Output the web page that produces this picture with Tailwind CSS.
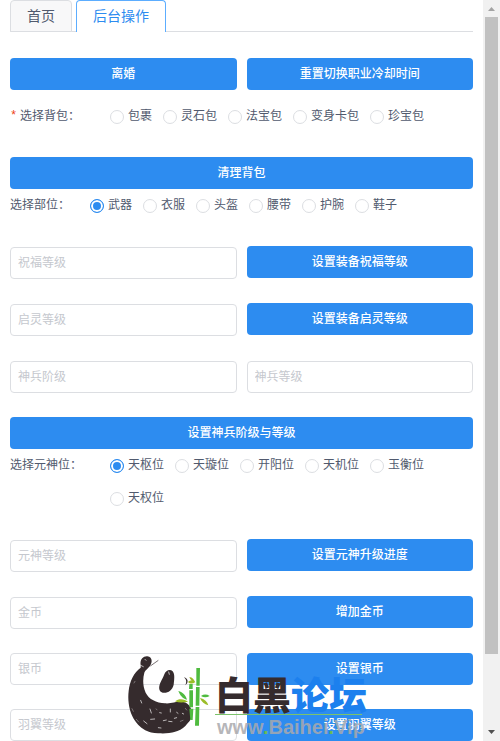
<!DOCTYPE html>
<html lang="zh-CN">

<head>
    <meta charset="UTF-8">
    <meta name="viewport" content="width=device-width, initial-scale=1.0">
    <title>后台操作</title>
    <script src="https://cdn.jsdelivr.net/npm/@tailwindcss/browser@4"></script>
</head>

<body class="relative flex h-screen overflow-hidden bg-white font-['Liberation_Sans','Noto_Sans_CJK_SC',sans-serif] text-xs text-[#515a6e]">
    <main class="flex-1 min-w-0 overflow-hidden px-[10px]">
        <nav class="flex gap-1 h-8 border-b border-[#dcdee2] text-sm">
            <a href="#" class="h-8 px-4 leading-[30px] rounded-t border border-[#dcdee2] bg-[#f8f8f9]">首页</a>
            <a href="#" class="h-8 px-4 leading-[30px] rounded-t border border-b-0 border-[#5cadff] bg-white text-[#2d8cf0]">后台操作</a>
        </nav>

        <form class="pt-[26px]">
            <div class="grid grid-cols-2 gap-[10px]">
                <button type="button" class="h-8 rounded bg-[#2d8cf0] text-white font-medium">离婚</button>
                <button type="button" class="h-8 rounded bg-[#2d8cf0] text-white font-medium">重置切换职业冷却时间</button>
            </div>

            <div class="flex mt-[10px] mb-6" role="radiogroup" aria-labelledby="bag_label">
                <span class="flex w-[100px] shrink-0 leading-[33px]" id="bag_label"><span class="w-[10px] text-[#ed4014] font-['Liberation_Mono']">*</span>选择背包：</span>
                <div class="flex flex-wrap gap-x-[11px] leading-[33px]">
                    <label class="flex items-center gap-1"><input type="radio" name="bag" class="appearance-none size-[14px] rounded-full border border-[#dcdee2] checked:border-[#2d8cf0] checked:bg-[#2d8cf0] checked:shadow-[inset_0_0_0_2px_white]">包裹</label>
                    <label class="flex items-center gap-1"><input type="radio" name="bag" class="appearance-none size-[14px] rounded-full border border-[#dcdee2] checked:border-[#2d8cf0] checked:bg-[#2d8cf0] checked:shadow-[inset_0_0_0_2px_white]">灵石包</label>
                    <label class="flex items-center gap-1"><input type="radio" name="bag" class="appearance-none size-[14px] rounded-full border border-[#dcdee2] checked:border-[#2d8cf0] checked:bg-[#2d8cf0] checked:shadow-[inset_0_0_0_2px_white]">法宝包</label>
                    <label class="flex items-center gap-1"><input type="radio" name="bag" class="appearance-none size-[14px] rounded-full border border-[#dcdee2] checked:border-[#2d8cf0] checked:bg-[#2d8cf0] checked:shadow-[inset_0_0_0_2px_white]">变身卡包</label>
                    <label class="flex items-center gap-1"><input type="radio" name="bag" class="appearance-none size-[14px] rounded-full border border-[#dcdee2] checked:border-[#2d8cf0] checked:bg-[#2d8cf0] checked:shadow-[inset_0_0_0_2px_white]">珍宝包</label>
                </div>
            </div>

            <button type="button" class="block w-full h-8 rounded bg-[#2d8cf0] text-white font-medium">清理背包</button>
            <div class="flex mb-6" role="radiogroup" aria-labelledby="part_label">
                <span class="w-20 shrink-0 leading-[33px]" id="part_label">选择部位：</span>
                <div class="flex flex-wrap gap-x-[11px] leading-[33px]">
                    <label class="flex items-center gap-1"><input type="radio" name="part" checked class="appearance-none size-[14px] rounded-full border border-[#dcdee2] checked:border-[#2d8cf0] checked:bg-[#2d8cf0] checked:shadow-[inset_0_0_0_2px_white]">武器</label>
                    <label class="flex items-center gap-1"><input type="radio" name="part" class="appearance-none size-[14px] rounded-full border border-[#dcdee2] checked:border-[#2d8cf0] checked:bg-[#2d8cf0] checked:shadow-[inset_0_0_0_2px_white]">衣服</label>
                    <label class="flex items-center gap-1"><input type="radio" name="part" class="appearance-none size-[14px] rounded-full border border-[#dcdee2] checked:border-[#2d8cf0] checked:bg-[#2d8cf0] checked:shadow-[inset_0_0_0_2px_white]">头盔</label>
                    <label class="flex items-center gap-1"><input type="radio" name="part" class="appearance-none size-[14px] rounded-full border border-[#dcdee2] checked:border-[#2d8cf0] checked:bg-[#2d8cf0] checked:shadow-[inset_0_0_0_2px_white]">腰带</label>
                    <label class="flex items-center gap-1"><input type="radio" name="part" class="appearance-none size-[14px] rounded-full border border-[#dcdee2] checked:border-[#2d8cf0] checked:bg-[#2d8cf0] checked:shadow-[inset_0_0_0_2px_white]">护腕</label>
                    <label class="flex items-center gap-1"><input type="radio" name="part" class="appearance-none size-[14px] rounded-full border border-[#dcdee2] checked:border-[#2d8cf0] checked:bg-[#2d8cf0] checked:shadow-[inset_0_0_0_2px_white]">鞋子</label>
                </div>
            </div>

            <div class="grid grid-cols-2 gap-[10px] mb-6">
                <input type="text" aria-label="祝福等级" placeholder="祝福等级" class="w-full h-8 mt-px px-[7px] rounded border border-[#dcdee2] placeholder:text-[#c5c8ce]">
                <button type="button" class="h-8 rounded bg-[#2d8cf0] text-white font-medium">设置装备祝福等级</button>
            </div>
            <div class="grid grid-cols-2 gap-[10px] mb-6">
                <input type="text" aria-label="启灵等级" placeholder="启灵等级" class="w-full h-8 mt-px px-[7px] rounded border border-[#dcdee2] placeholder:text-[#c5c8ce]">
                <button type="button" class="h-8 rounded bg-[#2d8cf0] text-white font-medium">设置装备启灵等级</button>
            </div>
            <div class="grid grid-cols-2 gap-[10px] mb-6">
                <input type="text" aria-label="神兵阶级" placeholder="神兵阶级" class="w-full h-8 mt-px px-[7px] rounded border border-[#dcdee2] placeholder:text-[#c5c8ce]">
                <input type="text" aria-label="神兵等级" placeholder="神兵等级" class="w-full h-8 mt-px px-[7px] rounded border border-[#dcdee2] placeholder:text-[#c5c8ce]">
            </div>

            <button type="button" class="block w-full h-8 rounded bg-[#2d8cf0] text-white font-medium">设置神兵阶级与等级</button>
            <div class="flex mb-6" role="radiogroup" aria-labelledby="soul_label">
                <span class="w-[100px] shrink-0 leading-[33px]" id="soul_label">选择元神位：</span>
                <div class="flex flex-wrap gap-x-[11px] leading-[33px]">
                    <label class="flex items-center gap-1"><input type="radio" name="soul" checked class="appearance-none size-[14px] rounded-full border border-[#dcdee2] checked:border-[#2d8cf0] checked:bg-[#2d8cf0] checked:shadow-[inset_0_0_0_2px_white]">天枢位</label>
                    <label class="flex items-center gap-1"><input type="radio" name="soul" class="appearance-none size-[14px] rounded-full border border-[#dcdee2] checked:border-[#2d8cf0] checked:bg-[#2d8cf0] checked:shadow-[inset_0_0_0_2px_white]">天璇位</label>
                    <label class="flex items-center gap-1"><input type="radio" name="soul" class="appearance-none size-[14px] rounded-full border border-[#dcdee2] checked:border-[#2d8cf0] checked:bg-[#2d8cf0] checked:shadow-[inset_0_0_0_2px_white]">开阳位</label>
                    <label class="flex items-center gap-1"><input type="radio" name="soul" class="appearance-none size-[14px] rounded-full border border-[#dcdee2] checked:border-[#2d8cf0] checked:bg-[#2d8cf0] checked:shadow-[inset_0_0_0_2px_white]">天机位</label>
                    <label class="flex items-center gap-1"><input type="radio" name="soul" class="appearance-none size-[14px] rounded-full border border-[#dcdee2] checked:border-[#2d8cf0] checked:bg-[#2d8cf0] checked:shadow-[inset_0_0_0_2px_white]">玉衡位</label>
                    <label class="flex items-center gap-1"><input type="radio" name="soul" class="appearance-none size-[14px] rounded-full border border-[#dcdee2] checked:border-[#2d8cf0] checked:bg-[#2d8cf0] checked:shadow-[inset_0_0_0_2px_white]">天权位</label>
                </div>
            </div>

            <div class="grid grid-cols-2 gap-[10px] mb-6">
                <input type="text" aria-label="元神等级" placeholder="元神等级" class="w-full h-8 mt-px px-[7px] rounded border border-[#dcdee2] placeholder:text-[#c5c8ce]">
                <button type="button" class="h-8 rounded bg-[#2d8cf0] text-white font-medium">设置元神升级进度</button>
            </div>
            <div class="grid grid-cols-2 gap-[10px] mb-6">
                <input type="text" aria-label="金币" placeholder="金币" class="w-full h-8 mt-px px-[7px] rounded border border-[#dcdee2] placeholder:text-[#c5c8ce]">
                <button type="button" class="h-8 rounded bg-[#2d8cf0] text-white font-medium">增加金币</button>
            </div>
            <div class="grid grid-cols-2 gap-[10px] mb-6">
                <input type="text" aria-label="银币" placeholder="银币" class="w-full h-8 px-[7px] rounded border border-[#dcdee2] placeholder:text-[#c5c8ce]">
                <button type="button" class="h-8 rounded bg-[#2d8cf0] text-white font-medium">设置银币</button>
            </div>
            <div class="grid grid-cols-2 gap-[10px]">
                <input type="text" aria-label="羽翼等级" placeholder="羽翼等级" class="w-full h-8 px-[7px] rounded border border-[#dcdee2] placeholder:text-[#c5c8ce]">
                <button type="button" class="h-8 rounded bg-[#2d8cf0] text-white font-medium">设置羽翼等级</button>
            </div>
        </form>
    </main>

    <!-- scrollbar -->
    <aside class="w-[17px] shrink-0 flex flex-col items-center bg-[#f1f1f1]">
        <svg class="h-[17px] w-[17px] shrink-0" viewBox="0 0 17 17"><path d="M5 11l3.500-4 3.500 4z" fill="#a3a3a3" /></svg>
        <div class="w-[13px] flex-[637] bg-[#c1c1c1]"></div>
        <div class="flex-[70]"></div>
        <svg class="h-[17px] w-[17px] shrink-0" viewBox="0 0 17 17"><path d="M5 6l3.500 4 3.500-4z" fill="#505050" /></svg>
    </aside>

    <!-- forum watermark -->
    <div class="absolute bottom-0 left-[110px] flex items-end pointer-events-none">
        <svg class="w-[105px] h-[101px]" viewBox="0 0 315 303">
            <g fill="#352b2d">
                <path d="M92 76C89 61 98 48 112 49C125 50 128 63 122 74C115 87 106 88 103 98C98 116 98 139 107 158C117 178 139 188 165 190C188 192 202 181 220 186C239 190 248 207 245 231C242 242 235 247 226 258C208 276 177 282 147 280C118 281 91 267 76 244C59 219 52 187 56 153C59 123 72 97 92 83Z" />
                <path d="M163 103C167 91 180 86 188 94C195 102 193 119 191 134C187 151 172 161 158 158C145 154 146 139 151 128C156 118 160 112 163 103Z" />
                <path d="M222 112C234 115 237 127 226 136C230 126 230 119 222 112Z" />
            </g>
            <path d="M121 78L145 61" stroke="#352b2d" stroke-width="2" />
            <g stroke="#fff" stroke-width="2" stroke-linecap="round" fill="none">
                <path d="M120 207l4 12M149 218l5 1M181 207v9M200 217l4 3M122 238l12-1M160 242l9-2M176 244l10 1M101 243l10 8M145 263l8 1M92 181l3 8M193 235l7-2M217 220l4 2M105 58l3 3M92 76l8 4M176 96l2 7" />
                <path d="M66 206l4 8M79 238l7 8M72 129l3-5M211 244l8-3M138 207l3 2M226 205l4 5" stroke-width="1" />
            </g>
            <g fill="#4fbb3f">
                <path d="M259 84h11l-1 53h-10zM258 141h11l-1 56h-11zM257 201h11l-1 56h-12z" />
                <path d="M238 132h10v15h-11zM238 151h11v51h-11zM238 206h12l-2 34h-7z" />
                <path d="M205 153C219 156 228 167 231 179C218 176 210 166 205 153ZM273 168C282 162 291 163 299 168C290 173 281 173 273 168Z" />
            </g>
            <g fill="#9cbd28">
                <path d="M195 184C207 174 224 177 234 185C221 188 207 189 195 184ZM270 174C284 177 292 185 295 196C283 193 275 186 270 174ZM238 111C248 112 252 119 256 127C246 124 240 119 238 111ZM234 126C242 119 250 121 255 127C247 133 240 131 234 126Z" />
            </g>
        </svg>
        <div class="flex flex-col">
            <div class="pb-[2px] font-['Noto_Sans_CJK_SC',sans-serif] font-black text-[38px] leading-[38px] text-[#352b2d]">白黑<span class="text-[#1c80ee]">论坛</span></div>
            <div class="w-[147px] h-px bg-[#7cc36b]"></div>
            <div class="pl-[2px] pb-[2px] font-['Liberation_Sans',sans-serif] font-bold text-[20px] leading-[24px] text-[#a9a9ad]/85">www<span class="text-[#69bb55]">.</span>Baihei<span class="text-[#69bb55]">.</span>Vip</div>
        </div>
    </div>
</body>

</html>
